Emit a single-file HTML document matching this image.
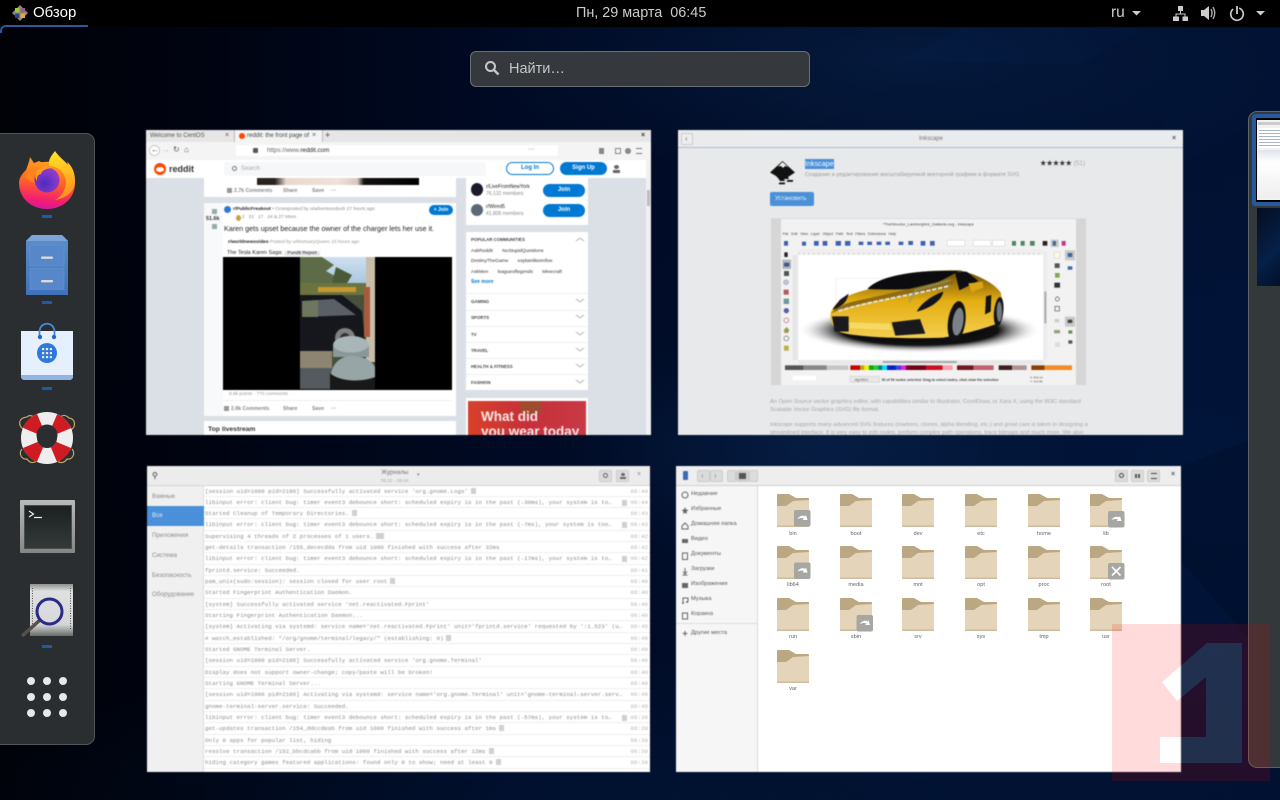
<!DOCTYPE html>
<html lang="ru"><head><meta charset="utf-8"><title>Обзор</title>
<style>
html,body{margin:0;padding:0;width:1280px;height:800px;overflow:hidden;background:#000}
body{position:relative;font-family:"Liberation Sans","Noto Sans CJK SC",sans-serif}
div,span,svg{box-sizing:border-box}
.a{position:absolute}
svg{position:absolute;display:block;overflow:visible}
#bg{left:0;top:0;width:1280px;height:800px;background:
radial-gradient(420px 120px at 900px 60px,rgba(14,48,96,.32),rgba(0,0,0,0) 100%),
radial-gradient(260px 120px at 820px 450px,rgba(14,48,96,.4),rgba(0,0,0,0) 100%),
radial-gradient(600px 400px at 1180px 460px,rgba(0,30,78,.35),rgba(0,0,0,0) 100%),
radial-gradient(700px 150px at 620px 800px,rgba(2,30,70,.35),rgba(0,0,0,0) 100%),
linear-gradient(90deg,#000208 0,#00030e 12%,#000a24 40%,#010f2c 70%,#011030 100%)}
.win{position:absolute;overflow:hidden;filter:blur(.45px)}
.t{position:absolute;white-space:nowrap}
.pill{position:absolute;border-radius:8px;background:#0079d3;color:#fff;font-size:6px;font-weight:bold;text-align:center}
.st{position:absolute;left:320px;font-size:4.4px;font-weight:bold;color:#444;white-space:nowrap}
.ln{position:absolute;left:320px;width:122px;height:1px;background:#edeff1}
#logs .r{height:11.33px;line-height:11px;border-bottom:1px solid #eee;position:relative;font-family:"Liberation Mono",monospace;font-size:5.85px;color:#8a8a8a;padding-left:1px;white-space:nowrap;background:#fff;overflow:hidden}
#logs .r i{position:absolute;right:2px;top:0;font-style:normal;color:#b5b5b5;background:#fff;padding-left:2px}
#logs .r b{display:inline-block;width:5px;height:6px;background:#d0d0d0;margin-left:3px;vertical-align:-1px}
#logs .r u{position:absolute;left:418px;top:3px;width:5px;height:6px;background:#d0d0d0}
.ls{position:absolute;left:5px;font-size:6.2px;color:#8b8b8b;white-space:nowrap}
.fs{position:absolute;left:15px;font-size:5.8px;color:#555;white-space:nowrap}
.fl{position:absolute;width:50px;text-align:center;font-size:5.6px;color:#666}
.btn{position:absolute;top:4px;height:12px;width:13px;background:#dcdcdc;border:1px solid #ccc;border-radius:2px}
.c{position:absolute;font-size:5.200px;line-height:8px;color:#878a8c;font-weight:bold;white-space:nowrap}
</style></head><body>
<div class="a" id="bg"></div>
<svg style="left:0;top:0" width="1280" height="800"><path d="M1080 65 1145 28H960L900 60Z" fill="#0c2f5e" opacity=".1"/><path d="M1145 28 1280 28V110L1170 170Z" fill="#02183a" opacity=".25"/><path d="M1090 500 1250 440V640L1180 560Z" fill="#000" opacity=".12"/></svg>

<!-- top bar -->
<div class="a" style="left:0;top:0;width:1280px;height:27px;background:#000"></div>
<div class="a" style="left:0;top:25px;width:88px;height:8px;border-top:2px solid #2a5a9e;border-left:2px solid #2a5a9e;border-top-left-radius:6px"></div>
<svg style="left:12px;top:5px" width="16" height="16" viewBox="0 0 16 16"><path d="M8 0 10.500 2.500V5.500H13.500L16 8 13.500 10.500H10.500V13.500L8 16 5.500 13.500V10.500H2.500L0 8 2.500 5.500H5.500V2.500Z" fill="#888"/><path d="M3 3H7.400V7.400H3Z" fill="#9ccd2a"/><path d="M8.600 3H13V7.400H8.600Z" fill="#9c5d8e"/><path d="M3 8.600H7.400V13H3Z" fill="#333f8c"/><path d="M8.600 8.600H13V13H8.600Z" fill="#efa724"/></svg>
<div class="t" style="left:33px;top:3px;font-size:15px;line-height:20px;color:#fff">Обзор</div>
<div class="t" style="left:576px;top:3px;font-size:14.400px;line-height:20px;color:#ccc">Пн, 29 марта&nbsp; 06:45</div>
<div class="t" style="left:1111px;top:3px;font-size:15.500px;line-height:20px;color:#ccc">ru</div>
<svg style="left:1080px;top:0" width="200" height="27" fill="#ccc"><path d="M52 11H61L56.500 15.500Z"/><path d="M98 6H103V11H98ZM93 16.500H99V21H93ZM102.500 16.500H108V21H102.500Z"/><path d="M100.500 11V14M96 17V14H105V17" fill="none" stroke="#ccc"/><path d="M121 10H124L129 6V20L124 16H121Z"/><path d="M131 9Q133 13 131 17M133 7Q136.500 13 133 19" fill="none" stroke="#aaa" stroke-width="1.400"/><circle cx="157" cy="14" r="6.300" fill="none" stroke="#ccc" stroke-width="1.600" stroke-dasharray="33 7" transform="rotate(-70 157 14)"/><path d="M157 6V14" stroke="#ccc" stroke-width="1.800"/><path d="M176 11H185L180.500 15.500Z"/></svg>

<!-- search -->
<div class="a" style="left:470px;top:51px;width:340px;height:36px;background:#35393d;border:1px solid #6a6e72;border-radius:6px"></div>
<svg style="left:484px;top:60px" width="16" height="16" fill="none" stroke="#c8c8c8" stroke-width="2"><circle cx="6.500" cy="6.500" r="4.500"/><path d="M10 10 14.500 14.500" stroke-width="2.400"/></svg>
<div class="t" style="left:509px;top:59px;font-size:14.500px;line-height:20px;color:#c6c6c6">Найти…</div>

<!-- dock -->
<div class="a" style="left:-12px;top:133px;width:107px;height:612px;background:#2a2e31;border:1px solid #50555a;border-radius:9px"></div>
<svg style="left:19px;top:151px" width="57" height="59" viewBox="0 0 57 59"><defs>
<linearGradient id="ff" x1=".6" y1="0" x2=".45" y2="1"><stop offset="0" stop-color="#ffa01c"/><stop offset=".45" stop-color="#ff6224"/><stop offset=".8" stop-color="#f5206e"/><stop offset="1" stop-color="#d6189b"/></linearGradient>
<linearGradient id="ffy" x1=".5" y1="0" x2=".6" y2="1"><stop offset="0" stop-color="#ffe226"/><stop offset="1" stop-color="#ff8a1e"/></linearGradient>
<radialGradient id="ffp" cx=".4" cy=".65" r=".7"><stop offset="0" stop-color="#4d2bc0"/><stop offset="1" stop-color="#9a3fc9"/></radialGradient></defs>
<path d="M6 22C8 16 10 12 11 6L15 12 20 10 24 12C16 14 10 18 6 22Z" fill="#ff8f1f"/>
<path d="M6 20C14 11 24 10 36 11 45 13 56 20 56 32 56 47 44 58 28 58 12 58 0 47 0 32 0 27 3 23 6 20Z" fill="url(#ff)"/>
<path d="M36 0C32 5 29 9 30 15 40 15 50 24 46 37 44 43 40 47 36 49 48 47 56 40 56 30 56 20 52 14 48 11L49 14C46 10 40 6 36 0Z" fill="url(#ffy)"/>
<circle cx="28" cy="29" r="12.500" fill="url(#ffp)"/>
<path d="M17 22C20 15 28 14 35 17 28 17 23 19 22 23 18 24 18 26 18 30 16 27 16 25 17 22Z" fill="#ff9a20"/>
<path d="M6 25C10 20 15 20 17 22 14 25 14 28 16 32 11 30 8 29 6 25Z" fill="#ff8420"/></svg>
<svg style="left:26px;top:235px" width="43" height="61" viewBox="0 0 43 61"><defs><linearGradient id="cb" x1="0" y1="0" x2="0" y2="1"><stop offset="0" stop-color="#5d8ecc"/><stop offset="1" stop-color="#3f72b9"/></linearGradient></defs>
<path d="M0 6 6 0H36L42 6V60H0Z" fill="url(#cb)"/><path d="M0 6 6 0H36L42 6Z" fill="#7ba5d6"/><rect x="4" y="10" width="34" height="21" fill="#5587c9" stroke="#6a9bd5" stroke-width=".5"/><rect x="4" y="33.500" width="34" height="21" fill="#5587c9" stroke="#6a9bd5" stroke-width=".5"/><rect x="15" y="21.500" width="12" height="2.400" rx="1" fill="#d8dade"/><rect x="15" y="45" width="12" height="2.400" rx="1" fill="#d8dade"/></svg>
<svg style="left:21px;top:322px" width="52" height="58" viewBox="0 0 52 58"><path d="M0 9H52V54Q52 58 48 58H4Q0 58 0 54Z" fill="#e6effc"/><path d="M0 53H52V54Q52 58 48 58H4Q0 58 0 54Z" fill="#91b4e2"/><path d="M18.500 15V10C18.500 -1 33.500 -1 33.500 10V15" fill="none" stroke="#4a87da" stroke-width="1.800"/><circle cx="19" cy="15" r="2.200" fill="#2a67b8"/><circle cx="33" cy="15" r="2.200" fill="#2a67b8"/><circle cx="26" cy="31" r="10" fill="#3079dc"/><g fill="#dfeaff"><rect x="21" y="26" width="2.200" height="2.200"/><rect x="24.900" y="26" width="2.200" height="2.200"/><rect x="28.800" y="26" width="2.200" height="2.200"/><rect x="21" y="30" width="2.200" height="2.200"/><rect x="24.900" y="30" width="2.200" height="2.200"/><rect x="28.800" y="30" width="2.200" height="2.200"/><rect x="21" y="34" width="2.200" height="2.200"/><rect x="24.900" y="34" width="2.200" height="2.200"/><rect x="28.800" y="34" width="2.200" height="2.200"/></g></svg>
<svg style="left:17px;top:410px" width="60" height="58" viewBox="0 0 60 58"><path d="M6 19C1 15 1 8 10 7 14 3 18 8 20 11M40 11C43 6 47 3 52 8 59 9 59 17 54 20M5 39C1 44 5 50 10 49 14 55 18 52 22 50M55 39C59 44 55 50 50 49 46 55 41 52 38 50" fill="none" stroke="#c6a65c" stroke-width="1.200"/><circle cx="30" cy="28" r="18" fill="none" stroke="#eee" stroke-width="16"/><circle cx="30" cy="28" r="18" fill="none" stroke="#cf1b22" stroke-width="16" stroke-dasharray="14 14.270" stroke-dashoffset="-7.100"/><circle cx="30" cy="25" r="10.500" fill="#2a2e31"/></svg>
<div class="a" style="left:20px;top:500px;width:55px;height:53px;background:linear-gradient(#b8baba,#858787);border-radius:1px"></div>
<div class="a" style="left:23.500px;top:505px;width:48px;height:44px;background:linear-gradient(#1b2020,#333a38);border:1px solid #4b4e4e"></div>
<svg style="left:28px;top:510px" width="16" height="14" fill="none" stroke="#eee" stroke-width="1.200"><path d="M1 1 5.500 4 1 7"/><path d="M6 7.500H14"/></svg>
<svg style="left:20px;top:582px" width="54" height="56" viewBox="0 0 54 56"><defs><linearGradient id="pg" x1="0" y1="0" x2="0" y2="1"><stop offset="0" stop-color="#8f9191"/><stop offset=".14" stop-color="#dfe1e1"/><stop offset=".78" stop-color="#d4d6d6"/><stop offset="1" stop-color="#6a6c6c"/></linearGradient></defs><rect x="10" y="2" width="43" height="52" fill="url(#pg)"/><path d="M12.500 6V48M50.500 6V48" stroke="#555" stroke-dasharray="1 1.500"/><path d="M20 38 2 54" stroke="#55504a" stroke-width="3.500"/><circle cx="29.500" cy="29.500" r="12.500" fill="#dcdce2" fill-opacity=".6" stroke="#2b2b85" stroke-width="3"/></svg>
<div class="a" style="left:42px;top:215px;width:10px;height:3px;background:#1e5ba3"></div>
<div class="a" style="left:42px;top:301px;width:10px;height:3px;background:#1e5ba3"></div>
<div class="a" style="left:42px;top:387px;width:10px;height:3px;background:#1e5ba3"></div>
<div class="a" style="left:42px;top:645px;width:10px;height:3px;background:#1e5ba3"></div>
<svg style="left:0;top:670px" width="95" height="55" fill="#e5e8ea"><circle cx="31" cy="11" r="4"/><circle cx="47" cy="11" r="4"/><circle cx="63" cy="11" r="4"/><circle cx="31" cy="27" r="4"/><circle cx="47" cy="27" r="4"/><circle cx="63" cy="27" r="4"/><circle cx="31" cy="43" r="4"/><circle cx="47" cy="43" r="4"/><circle cx="63" cy="43" r="4"/></svg>

<!-- reddit window -->
<div class="win" style="left:146px;top:130px;width:505px;height:305px;background:#dae0e6">
 <div class="a" style="left:0;top:0;width:505px;height:12px;background:#e6e6e6"></div>
 <div class="a" style="left:88px;top:0;width:89px;height:12px;background:#f4f4f4;border-left:1px solid #bbb;border-right:1px solid #bbb"></div>
 <div class="t" style="left:4px;top:1px;font-size:6px;line-height:10px;color:#555">Welcome to CentOS</div>
 <div class="t" style="left:79px;top:1px;font-size:7px;line-height:10px;color:#555">×</div>
 <div class="a" style="left:93px;top:3px;width:6px;height:6px;border-radius:50%;background:#ff4500"></div>
 <div class="t" style="left:101px;top:1px;font-size:6px;line-height:10px;color:#444">reddit: the front page of</div>
 <div class="t" style="left:166px;top:1px;font-size:7px;line-height:10px;color:#555">×</div>
 <div class="t" style="left:179px;top:0;font-size:9px;line-height:11px;color:#444">+</div>
 <div class="t" style="left:495px;top:1px;font-size:7px;line-height:10px;font-weight:bold;color:#333">×</div>
 <div class="a" style="left:0;top:12px;width:505px;height:18px;background:#f4f4f4"></div>
 <div class="a" style="left:3px;top:15px;width:11px;height:11px;border-radius:50%;background:#fff;border:1px solid #ccc"></div>
 <div class="t" style="left:5px;top:15px;font-size:8px;line-height:10px;color:#555">←</div>
 <div class="t" style="left:16px;top:15px;font-size:8px;line-height:10px;color:#bbb">→</div>
 <div class="t" style="left:27px;top:15px;font-size:8px;line-height:10px;color:#555">↻</div>
 <div class="t" style="left:38px;top:15px;font-size:8px;line-height:10px;color:#555">⌂</div>
 <div class="a" style="left:90px;top:15px;width:322px;height:11px;background:#fff"></div>
 <div class="t" style="left:121px;top:16px;font-size:6.200px;line-height:9px;color:#666">https://www.<span style="color:#222">reddit.com</span></div>
 <div class="a" style="left:107px;top:18px;width:5px;height:5px;background:#555;border-radius:1px"></div>
 <div class="t" style="left:382px;top:15px;font-size:7px;line-height:9px;color:#666">···</div>
 <div class="a" style="left:453px;top:18px;width:5px;height:6px;background:#888"></div>
 <div class="a" style="left:469px;top:18px;width:6px;height:6px;border:1px solid #888"></div>
 <div class="a" style="left:479px;top:18px;width:6px;height:6px;background:#888;border-radius:50%"></div>
 <div class="a" style="left:490px;top:18px;width:6px;height:6px;border-top:1px solid #777;border-bottom:1px solid #777"></div>
 <div class="a" style="left:0;top:30px;width:500px;height:18px;background:#fff"></div>
 <div class="a" style="left:8px;top:33px;width:12px;height:12px;border-radius:50%;background:#ff4500"></div>
 <div class="a" style="left:10px;top:37px;width:8px;height:5px;border-radius:50%;background:#fff"></div>
 <div class="t" style="left:23px;top:32px;font-size:9px;line-height:14px;font-weight:bold;color:#333">reddit</div>
 <div class="a" style="left:78px;top:32px;width:262px;height:14px;background:#f6f7f8;border-radius:2px"></div>
 <div class="t" style="left:95px;top:34px;font-size:6px;line-height:10px;color:#aaa">Search</div>
 <div class="a" style="left:86px;top:36px;width:5px;height:5px;border:1px solid #777;border-radius:50%"></div>
 <div class="pill" style="left:360px;top:32px;width:48px;height:13px;background:#fff;border:1px solid #0079d3;color:#0079d3;line-height:11px">Log In</div>
 <div class="pill" style="left:414px;top:32px;width:47px;height:13px;line-height:13px">Sign Up</div>
 <div class="a" style="left:468px;top:35px;width:5px;height:4px;background:#666;border-radius:50%"></div>
 <div class="a" style="left:467px;top:40px;width:7px;height:3px;background:#666"></div>
 <div class="a" style="left:58px;top:48px;width:252px;height:19px;background:#fff"></div>
 <div class="a" style="left:111px;top:48px;width:162px;height:7px;background:linear-gradient(90deg,#2a2220 0,#2a2220 11%,#e8d8d0 18%,#efe2da 50%,#d8c8c0 62%,#141010 66%,#000 100%)"></div>
 <div class="a" style="left:81px;top:58px;width:5px;height:5px;background:#999"></div>
 <div class="c" style="left:88px;top:57px">2.7k Comments</div><div class="c" style="left:137px;top:57px">Share</div><div class="c" style="left:166px;top:57px">Save</div><div class="c" style="left:185px;top:57px">···</div>
 <!-- post -->
 <div class="a" style="left:58px;top:73px;width:252px;height:213px;background:#fff"></div>
 <div class="a" style="left:58px;top:73px;width:19px;height:213px;background:#f8f9fa"></div>
 <div class="t" style="left:60px;top:85px;font-size:5.400px;line-height:8px;font-weight:bold;color:#333">51.6k</div>
 <div class="a" style="left:66px;top:79px;width:5px;height:5px;background:#9aa"></div>
 <div class="a" style="left:66px;top:94px;width:5px;height:5px;background:#9aa"></div>
 <div class="a" style="left:78px;top:76px;width:7px;height:7px;border-radius:50%;background:#2a7ad0"></div>
 <div class="t" style="left:87px;top:76px;font-size:4.800px;line-height:8px;color:#888"><b style="color:#222">r/PublicFreakout</b> • Crossposted by u/adventureduck 27 hours ago</div>
 <div class="t" style="left:96px;top:84px;font-size:4.800px;line-height:8px;color:#888">2 &nbsp;&nbsp;31 &nbsp;&nbsp;17 &nbsp;&nbsp;24 &amp; 27 More</div>
 <div class="a" style="left:90px;top:85px;width:5px;height:6px;border-radius:50%;background:#c9a23a"></div>
 <div class="t" style="left:78px;top:93px;font-size:7.200px;line-height:11px;color:#222">Karen gets upset because the owner of the charger lets her use it.</div>
 <div class="pill" style="left:283px;top:75px;width:24px;height:10px;line-height:10px;font-size:5px">+ Join</div>
 <div class="t" style="left:82px;top:109px;font-size:4.800px;line-height:8px;color:#999"><b style="color:#222">r/worldnewsvideo</b> Posted by u/MortuaryQueen 23 hours ago</div>
 <div class="t" style="left:81px;top:119px;font-size:5.500px;line-height:9px;color:#222">The Tesla Karen Saga: <span style="background:#e5e7ea;padding:0 3px;font-size:4.800px">Pundit Report</span></div>
 <div class="a" style="left:77px;top:127px;width:229px;height:133px;background:#000"></div>
 <svg style="left:154px;top:127px" width="75" height="132" viewBox="0 0 75 132"><defs><linearGradient id="sk" x1="0" y1="0" x2="0" y2="1"><stop offset="0" stop-color="#cfe0ee"/><stop offset="1" stop-color="#a4c4de"/></linearGradient></defs><rect width="75" height="132" fill="#46503a"/><rect width="75" height="30" fill="url(#sk)"/><path d="M0 0H22L34 8 26 14 40 22 28 36H0Z" fill="#5e6b48"/><path d="M36 10 52 18 46 28 32 26Z" fill="#4a5a38"/><rect y="26" width="66" height="12" fill="#6a7440"/><rect x="18" y="30" width="38" height="5" fill="#c99830"/><path d="M0 38 42 38 62 54 66 94H0Z" fill="#15171d"/><path d="M2 44 34 42 56 58 2 60Z" fill="#5b6066"/><path d="M2 44 18 43V60H2Z" fill="#6e7660"/><circle cx="45" cy="81" r="13" fill="#181818"/><circle cx="45" cy="81" r="10" fill="#7e8082"/><circle cx="45" cy="81" r="5" fill="#333"/><rect x="66" y="0" width="9" height="105" fill="#c9bda8"/><path d="M64 30H70V80H64Z" fill="#a85a3c"/><rect y="94" width="32" height="18" fill="#8d8572"/><rect y="111" width="34" height="21" fill="#555a5e"/><ellipse cx="51" cy="88" rx="18" ry="9" fill="#a9b6b8"/><path d="M33 88C36 98 66 98 69 88V100H33Z" fill="#8b989a"/><path d="M31 129C28 110 38 98 54 99 66 100 73 105 75 110V129Z" fill="#98a5a7"/><path d="M30 116C38 124 60 126 75 120V132H30Z" fill="#191919"/></svg>
 <div class="t" style="left:83px;top:261px;font-size:4.800px;line-height:8px;color:#999">8.6k points · 770 comments</div>
 <div class="a" style="left:77px;top:270px;width:229px;height:1px;background:#eee"></div>
 <div class="a" style="left:78px;top:276px;width:5px;height:5px;background:#999"></div>
 <div class="c" style="left:85px;top:275px">2.8k Comments</div><div class="c" style="left:137px;top:275px">Share</div><div class="c" style="left:166px;top:275px">Save</div><div class="c" style="left:185px;top:275px">···</div>
 <div class="a" style="left:58px;top:291px;width:252px;height:14px;background:#fff"></div>
 <div class="t" style="left:62px;top:295px;font-size:6.800px;line-height:10px;font-weight:bold;color:#333">Top livestream</div>
 <!-- side -->
 <div class="a" style="left:320px;top:48px;width:122px;height:47px;background:#fff"></div>
 <div class="a" style="left:325px;top:53px;width:12px;height:13px;border-radius:50%;background:#1a1a2a"></div>
 <div class="a" style="left:325px;top:74px;width:12px;height:12px;border-radius:50%;background:#5d6877"></div>
 <div class="t" style="left:340px;top:54px;font-size:5px;line-height:7px;color:#222">r/LiveFromNewYork<br><span style="color:#888">76,132 members</span></div>
 <div class="t" style="left:340px;top:74px;font-size:5px;line-height:7px;color:#222">r/Wired5<br><span style="color:#888">41,806 members</span></div>
 <div class="pill" style="left:397px;top:54px;width:42px;height:13px;line-height:13px;font-size:6px">Join</div>
 <div class="pill" style="left:397px;top:74px;width:42px;height:13px;line-height:13px;font-size:6px">Join</div>
 <div class="a" style="left:320px;top:102px;width:122px;height:158px;background:#fff"></div>
 <div class="st" style="left:325px;top:107px">POPULAR COMMUNITIES</div>
 <div class="t" style="left:325px;top:117px;font-size:4.800px;line-height:10px;color:#333;word-spacing:8px">AskReddit NoStupidQuestions<br>DestinyTheGame explainlikeimfive</div>
 <div class="t" style="left:325px;top:139px;height:5px;overflow:hidden;font-size:4.800px;line-height:8px;color:#333;word-spacing:8px">AskMen leagueoflegends Minecraft</div>
 <div class="t" style="left:325px;top:149px;font-size:5px;line-height:7px;font-weight:bold;color:#0079d3">See more</div>
 <div class="ln" style="top:163px"></div><div class="ln" style="top:180px"></div><div class="ln" style="top:196px"></div><div class="ln" style="top:212px"></div><div class="ln" style="top:228px"></div><div class="ln" style="top:244px"></div>
 <div class="st" style="left:325px;top:169px">GAMING</div><div class="st" style="left:325px;top:185px">SPORTS</div><div class="st" style="left:325px;top:202px">TV</div><div class="st" style="left:325px;top:218px">TRAVEL</div><div class="st" style="left:325px;top:234px">HEALTH &amp; FITNESS</div><div class="st" style="left:325px;top:250px">FASHION</div>
 <svg style="left:429px;top:105px" width="10" height="155" fill="none" stroke="#aaa" stroke-width=".8"><path d="M1 6 5 3 9 6"/><path d="M1 64 5 67 9 64M1 80 5 83 9 80M1 97 5 100 9 97M1 113 5 116 9 113M1 129 5 132 9 129M1 145 5 148 9 145"/></svg>
 <div class="a" style="left:320px;top:268px;width:122px;height:37px;background:#fff"></div>
 <div class="a" style="left:322px;top:271px;width:118px;height:34px;background:linear-gradient(90deg,#d8412a 0,#c5303a 50%,#c93a45 100%);overflow:hidden">
  <div class="a" style="left:52px;top:0;width:22px;height:14px;background:#a04a30;border-radius:0 0 8px 8px"></div>
  <div class="t" style="left:13px;top:8px;font-size:13.500px;line-height:15px;font-weight:bold;color:#f4eaea">What did<br>you wear today</div>
 </div>
 <div class="a" style="left:500px;top:30px;width:5px;height:275px;background:#f0f0f0"></div>
 <div class="a" style="left:501px;top:60px;width:3px;height:16px;background:#bcbcbc"></div>
</div>

<!-- inkscape window -->
<div class="win" style="left:678px;top:130px;width:505px;height:305px;background:#e8e9ea">
 <div class="a" style="left:0;top:0;width:505px;height:18px;background:#eaebec;border-bottom:1px solid #a9bed4"></div>
 <div class="a" style="left:3px;top:3px;width:12px;height:12px;background:#eee;border:1px solid #ccc;border-radius:1px"></div>
 <div class="t" style="left:7px;top:4px;font-size:8px;line-height:10px;color:#777">‹</div>
 <div class="t" style="left:241px;top:5px;font-size:6px;line-height:8px;color:#777">Inkscape</div>
 <div class="t" style="left:494px;top:4px;font-size:7px;line-height:9px;font-weight:bold;color:#555">×</div>
 <svg style="left:92px;top:31px" width="26" height="24" viewBox="0 0 26 24"><path d="M12.500 0 25 11.500 18 16 19 18 14 18 15 20 10 20 8 17 6 15 0 11.500Z" fill="#111"/><path d="M12.500 1 8 5.500 11 5 13 7 15 5 18 6Z" fill="#eee"/><rect x="17" y="19" width="6" height="1.800" fill="#111"/><rect x="9" y="21.500" width="6" height="1.800" fill="#111"/></svg>
 <div class="a" style="left:127px;top:29px;width:29px;height:10px;background:#4a90d9"></div>
 <div class="t" style="left:127px;top:29px;font-size:7.200px;line-height:10px;color:#fff">Inkscape</div>
 <div class="t" style="left:127px;top:41px;font-size:5.600px;line-height:8px;color:#9a9a9a">Создание и редактирование масштабируемой векторной графики в формате SVG</div>
 <div class="t" style="left:362px;top:29px;font-size:6.400px;line-height:9px;color:#333">★★★★★ <span style="color:#aaa">(51)</span></div>
 <div class="a" style="left:92px;top:62px;width:44px;height:14px;background:#4a90d9;border-radius:2px"></div>
 <div class="t" style="left:97px;top:65px;font-size:6px;line-height:8px;color:#e8f0fa">Установить</div>
 <div class="t" style="left:92px;top:268px;width:320px;font-size:5.700px;line-height:8px;color:#a6a6a6;white-space:normal">An Open Source vector graphics editor, with capabilities similar to Illustrator, CorelDraw, or Xara X, using the W3C standard Scalable Vector Graphics (SVG) file format.</div>
 <div class="t" style="left:92px;top:291px;width:320px;font-size:5.700px;line-height:8px;color:#a6a6a6;white-space:normal">Inkscape supports many advanced SVG features (markers, clones, alpha blending, etc.) and great care is taken in designing a streamlined interface. It is very easy to edit nodes, perform complex path operations, trace bitmaps and much more. We also</div>
</div>
<svg style="left:770px;top:215px;filter:blur(.45px)" width="320" height="220" viewBox="0 0 960 660"><defs>
<linearGradient id="cy" x1="0" y1="0" x2="0" y2="1"><stop offset="0" stop-color="#6b4a05"/><stop offset=".45" stop-color="#e4ae12"/><stop offset="1" stop-color="#f4cf50"/></linearGradient>
<radialGradient id="sh" cx=".5" cy=".5" r=".5"><stop offset="0" stop-color="#000"/><stop offset=".65" stop-color="#111"/><stop offset="1" stop-color="#fff" stop-opacity="0"/></radialGradient></defs>
<rect x="3" y="10" width="945" height="500" fill="#d6d6d6"/>
<rect x="33" y="12" width="885" height="498" fill="#f2f2f2"/>
<text x="475" y="32" font-size="12" fill="#444" text-anchor="middle" font-family="Liberation Sans,sans-serif">*TheStructor_Lamborghini_Gallardo.svg - Inkscape</text>
<text x="38" y="60" font-size="11" fill="#444" font-family="Liberation Sans,sans-serif" word-spacing="5">File Edit View Layer Object Path Text Filters Extensions Help</text>
<g fill="#3f5fb0"><rect x="42" y="78" width="12" height="14"/><rect x="96" y="80" width="12" height="12"/><rect x="132" y="78" width="14" height="14"/><rect x="158" y="78" width="14" height="14"/><rect x="197" y="78" width="16" height="14"/><rect x="225" y="78" width="16" height="14"/><rect x="266" y="80" width="14" height="10"/><rect x="292" y="80" width="14" height="10"/><rect x="320" y="80" width="14" height="10"/><rect x="346" y="80" width="14" height="10"/><rect x="386" y="80" width="14" height="10"/><rect x="415" y="78" width="14" height="12"/><rect x="452" y="78" width="14" height="14"/><rect x="480" y="78" width="14" height="14"/></g>
<g fill="#fff" stroke="#bbb"><rect x="532" y="76" width="52" height="17"/><rect x="610" y="76" width="52" height="17"/><rect x="668" y="76" width="36" height="17"/></g>
<g fill="#50835f"><rect x="726" y="78" width="12" height="14"/><rect x="752" y="78" width="12" height="14"/><rect x="780" y="78" width="14" height="14"/></g><rect x="818" y="78" width="14" height="14" fill="#222"/><rect x="842" y="74" width="24" height="22" fill="#c8c8c8"/><rect x="848" y="78" width="10" height="14" fill="#3a6aa5"/><rect x="875" y="78" width="12" height="14" fill="#c03a7a"/>
<rect x="86" y="104" width="735" height="14" fill="#eee"/><path d="M86 116H820" stroke="#777" stroke-dasharray="1 14" stroke-width="5"/>
<rect x="68" y="120" width="14" height="315" fill="#e6e6e6"/>
<rect x="86" y="120" width="733" height="315" fill="#fff"/>
<rect x="820" y="110" width="12" height="325" fill="#ececec"/><rect x="823" y="230" width="6" height="95" fill="#aaa"/>
<rect x="86" y="435" width="735" height="12" fill="#e8e8e8"/><rect x="338" y="438" width="222" height="6" fill="#aaa"/>
<g><rect x="38" y="135" width="24" height="26" fill="#bbb" stroke="#888"/><rect x="43" y="112" width="10" height="14" fill="#222"/><rect x="42" y="143" width="16" height="12" fill="#3a5a8a"/><rect x="42" y="168" width="15" height="15" fill="#555"/><circle cx="48" cy="202" r="7" fill="#bcd" stroke="#556"/><rect x="41" y="224" width="15" height="15" fill="#b65a5a"/><rect x="41" y="251" width="16" height="16" fill="#6a9a9a"/><circle cx="49" cy="287" r="8" fill="#5c5ca8"/><circle cx="49" cy="316" r="7" fill="none" stroke="#b65a7a" stroke-width="2"/><path d="M41 345 50 336 58 345 54 354H44Z" fill="#9c9c50"/><circle cx="49" cy="370" r="7" fill="none" stroke="#666" stroke-width="2"/><rect x="42" y="392" width="14" height="15" fill="#bcb040"/></g>
<ellipse cx="448" cy="345" rx="365" ry="70" fill="url(#sh)"/>
<path d="M182 295C190 265 220 240 300 222 340 178 440 165 570 166 610 175 670 200 692 232 702 270 698 300 692 322 640 342 590 355 520 368 420 372 270 368 212 352 190 340 178 320 182 295Z" fill="url(#cy)"/>
<path d="M292 222C330 180 440 165 566 168 530 190 490 212 440 220 390 225 340 224 292 222Z" fill="#0c0c10"/>
<path d="M555 172 590 170 625 198 568 226Z" fill="#0d0d12"/>
<path d="M182 296C230 270 390 245 520 222L540 215 552 200 548 190C470 210 340 240 240 262 210 272 192 284 182 296Z" fill="#8e6a12"/>
<path d="M205 288C300 258 430 240 540 212" fill="none" stroke="#dfe3e0" stroke-width="6" stroke-dasharray="14 4"/>
<path d="M418 262 436 226 470 216 540 196" fill="none" stroke="#8a9a74" stroke-width="6" stroke-dasharray="5 3"/>
<path d="M190 280 210 254 236 236C230 262 218 272 190 285Z" fill="#17171c"/>
<path d="M440 290C455 262 490 240 520 230 515 258 480 280 440 290Z" fill="#12121a"/>
<path d="M186 304H236V350H194Z" fill="#1a1a1e"/><path d="M365 322 450 312 466 356 376 362Z" fill="#1a1a1e"/>
<path d="M236 322 360 326 365 345 240 340Z" fill="#f7df6e" opacity=".8"/>
<ellipse cx="560" cy="320" rx="26" ry="62" fill="#121214" transform="rotate(8 560 320)"/><ellipse cx="564" cy="320" rx="16" ry="42" fill="#7a8287" transform="rotate(8 564 320)"/>
<ellipse cx="686" cy="290" rx="14" ry="44" fill="#141416" transform="rotate(6 686 290)"/><ellipse cx="688" cy="290" rx="8" ry="30" fill="#727a80"/>
<path d="M595 205 638 200 640 218 604 232Z" fill="#d8a614"/><path d="M648 244 664 240 662 290 645 298Z" fill="#121212"/>
<path d="M198 190H340M198 190V268" fill="none" stroke="#aaa" stroke-dasharray="2 3"/>
<rect x="33" y="448" width="885" height="17" fill="#f0f0f0"/>
<rect x="45" y="451" width="125" height="14" fill="#555"/><rect x="100" y="451" width="135" height="14" fill="#aaa" opacity=".6"/>
<g><rect x="241" y="451" width="30" height="14" fill="#cc0000"/><rect x="271" y="451" width="12" height="14" fill="#aab000"/><rect x="283" y="451" width="14" height="14" fill="#ffe800"/><rect x="297" y="451" width="14" height="14" fill="#00aa00"/><rect x="311" y="451" width="14" height="14" fill="#22cc22"/><rect x="325" y="451" width="12" height="14" fill="#008080"/><rect x="337" y="451" width="14" height="14" fill="#00e0ff"/><rect x="351" y="451" width="28" height="14" fill="#0020c0"/><rect x="379" y="451" width="14" height="14" fill="#4040e0"/><rect x="393" y="451" width="15" height="14" fill="#e020e0"/><rect x="408" y="451" width="60" height="14" fill="#700018"/><rect x="468" y="451" width="50" height="14" fill="#c81020"/><rect x="518" y="451" width="30" height="14" fill="#f8a0a8"/><rect x="561" y="451" width="50" height="14" fill="#701820"/><rect x="611" y="451" width="60" height="14" fill="#c06070"/><rect x="686" y="451" width="40" height="14" fill="#3a2020"/><rect x="726" y="451" width="44" height="14" fill="#b09090"/><rect x="784" y="451" width="40" height="14" fill="#884000"/><rect x="824" y="451" width="82" height="14" fill="#f08c28"/></g>
<rect x="68" y="482" width="70" height="14" fill="#fff"/><rect x="240" y="484" width="88" height="18" fill="#e8e8e8" stroke="#bbb"/>
<text x="335" y="498" font-size="10.500" font-weight="bold" fill="#444" font-family="Liberation Sans,sans-serif">50 of 50 nodes selected. Drag to select nodes, click clear the selection</text>
<text x="252" y="498" font-size="10" fill="#555" font-family="Liberation Sans,sans-serif">-8g14512</text>
<text x="780" y="491" font-size="9" fill="#555" font-family="Liberation Sans,sans-serif">X: 843.14</text><text x="780" y="503" font-size="9" fill="#555" font-family="Liberation Sans,sans-serif">Y: 314.85</text>
<g><rect x="853" y="112" width="16" height="18" fill="#fbfbe0" stroke="#bbb"/><rect x="854" y="145" width="15" height="14" fill="#555"/><rect x="855" y="174" width="14" height="14" fill="#7bac55"/><rect x="853" y="203" width="17" height="15" fill="#333"/><circle cx="862" cy="252" r="6" fill="none" stroke="#555" stroke-width="2"/><rect x="855" y="274" width="13" height="14" fill="none" stroke="#555" stroke-width="2"/><rect x="854" y="312" width="14" height="10" fill="#ccc"/><rect x="852" y="345" width="18" height="10" fill="#9ba07a"/><rect x="855" y="382" width="15" height="14" fill="#ddd"/><rect x="885" y="106" width="30" height="30" fill="#c8c8c8"/><rect x="893" y="114" width="14" height="12" fill="#3a6aa5"/><rect x="893" y="154" width="14" height="10" fill="#3a6aa5"/><rect x="885" y="305" width="30" height="30" fill="#c8c8c8"/><rect x="893" y="314" width="14" height="10" fill="#444"/><rect x="895" y="346" width="12" height="10" fill="#5b9a4a"/><rect x="895" y="376" width="12" height="10" fill="#555"/></g>
</svg>

<!-- logs window -->
<div class="win" id="logs" style="left:147px;top:466px;width:503px;height:306px;background:#fff">
 <div class="a" style="left:0;top:0;width:503px;height:20px;background:#ececec;border-bottom:1px solid #d4d4d4"></div>
 <div class="t" style="left:5px;top:5px;font-size:8px;line-height:9px;font-weight:bold;color:#666">⚲</div>
 <div class="t" style="left:234px;top:3px;font-size:6.200px;line-height:8px;color:#777;text-align:center">Журналы<br><span style="font-size:4.500px;color:#aaa">05:32 – 06:44</span></div>
 <div class="t" style="left:270px;top:6px;font-size:5px;line-height:7px;color:#888">▾</div>
 <div class="btn" style="left:452px"></div><div class="btn" style="left:469px"></div>
 <div class="a" style="left:456px;top:7px;width:5px;height:5px;border:1px solid #666;border-radius:50%"></div>
 <div class="a" style="left:474px;top:7px;width:4px;height:3px;background:#666;border-radius:50%"></div><div class="a" style="left:473px;top:11px;width:6px;height:2px;background:#666"></div>
 <div class="t" style="left:490px;top:5px;font-size:7px;line-height:8px;color:#888">×</div>
 <div class="a" style="left:0;top:20px;width:57px;height:286px;background:#f0f0f0;border-right:1px solid #ddd"></div>
 <div class="a" style="left:0;top:39.500px;width:57px;height:20px;background:#4a90d9"></div>
 <div class="ls" style="top:27px">Важные</div><div class="ls" style="top:46px;color:#e2eefa">Все</div><div class="ls" style="top:66px">Приложения</div><div class="ls" style="top:86px">Система</div><div class="ls" style="top:106px">Безопасность</div><div class="ls" style="top:125px">Оборудование</div>
 <div class="a" style="left:57px;top:19.500px;width:446px">
 <div class="r">[session uid=1000 pid=2186] Successfully activated service 'org.gnome.Logs'<b></b><i>06:44</i></div>
 <div class="r">libinput error: client bug: timer event3 debounce short: scheduled expiry is in the past (-30ms), your system is to…<u></u><i>06:44</i></div>
 <div class="r">Started Cleanup of Temporary Directories.<b></b><i>06:43</i></div>
 <div class="r">libinput error: client bug: timer event3 debounce short: scheduled expiry is in the past (-7ms), your system is too…<u></u><i>06:43</i></div>
 <div class="r">Supervising 4 threads of 2 processes of 1 users.<b style="width:8px"></b><i>06:42</i></div>
 <div class="r">get-details transaction /155_dececdda from uid 1000 finished with success after 32ms<i>06:42</i></div>
 <div class="r">libinput error: client bug: timer event3 debounce short: scheduled expiry is in the past (-17ms), your system is to…<u></u><i>06:42</i></div>
 <div class="r">fprintd.service: Succeeded.<i>06:41</i></div>
 <div class="r">pam_unix(sudo:session): session closed for user root<b></b><i>06:40</i></div>
 <div class="r">Started Fingerprint Authentication Daemon.<i>06:40</i></div>
 <div class="r">[system] Successfully activated service 'net.reactivated.Fprint'<i>06:40</i></div>
 <div class="r">Starting Fingerprint Authentication Daemon...<i>06:40</i></div>
 <div class="r">[system] Activating via systemd: service name='net.reactivated.Fprint' unit='fprintd.service' requested by ':1.523' (u…<i>06:40</i></div>
 <div class="r"># watch_established: "/org/gnome/terminal/legacy/" (establishing: 0)<b></b><i>06:40</i></div>
 <div class="r">Started GNOME Terminal Server.<i>06:40</i></div>
 <div class="r">[session uid=1000 pid=2186] Successfully activated service 'org.gnome.Terminal'<i>06:40</i></div>
 <div class="r">Display does not support owner-change; copy/paste will be broken!<i>06:40</i></div>
 <div class="r">Starting GNOME Terminal Server...<i>06:40</i></div>
 <div class="r">[session uid=1000 pid=2186] Activating via systemd: service name='org.gnome.Terminal' unit='gnome-terminal-server.serv…<i>06:40</i></div>
 <div class="r">gnome-terminal-server.service: Succeeded.<i>06:40</i></div>
 <div class="r">libinput error: client bug: timer event3 debounce short: scheduled expiry is in the past (-57ms), your system is to…<u></u><i>06:39</i></div>
 <div class="r">get-updates transaction /154_ddccdeab from uid 1000 finished with success after 1ms<b></b><i>06:39</i></div>
 <div class="r">Only 0 apps for popular list, hiding<i>06:39</i></div>
 <div class="r">resolve transaction /152_bbcdcabb from uid 1000 finished with success after 12ms<b></b><i>06:39</i></div>
 <div class="r">hiding category games featured applications: found only 0 to show; need at least 9<b></b><i>06:39</i></div>
 </div>
</div>

<!-- files window -->
<div class="win" style="left:676px;top:466px;width:505px;height:306px;background:#fff">
 <div class="a" style="left:0;top:0;width:505px;height:20px;background:#eeeeee;border-bottom:1px solid #cfcfcf"></div>
 <div class="a" style="left:7px;top:5px;width:5px;height:9px;background:#3a6ab5;border-radius:1px"></div>
 <div class="btn" style="left:21px;width:13px"></div><div class="btn" style="left:34px;width:13px"></div><div class="btn" style="left:51px;width:9px"></div><div class="btn" style="left:60px;width:13px;background:#cfcfcf"></div><div class="btn" style="left:73px;width:9px"></div>
 <div class="t" style="left:25px;top:5px;font-size:8px;line-height:9px;color:#888">‹</div><div class="t" style="left:38px;top:5px;font-size:8px;line-height:9px;color:#888">›</div>
 <div class="a" style="left:63px;top:7px;width:7px;height:6px;background:#555"></div>
 <div class="btn" style="left:439px"></div><div class="btn" style="left:455px"></div><div class="btn" style="left:471px"></div>
 <div class="a" style="left:443px;top:7px;width:5px;height:5px;border:1px solid #444;border-radius:50%"></div>
 <div class="a" style="left:459px;top:8px;width:5px;height:4px;border-left:2px solid #555;border-right:2px solid #555"></div>
 <div class="a" style="left:475px;top:7px;width:6px;height:6px;border-top:1px solid #444;border-bottom:1px solid #444"></div>
 <div class="t" style="left:495px;top:5px;font-size:7px;line-height:8px;font-weight:bold;color:#555">×</div>
 <div class="a" style="left:0;top:20px;width:82px;height:286px;background:#f6f6f6;border-right:1px solid #d8d8d8"></div>
 <div class="fs" style="top:25px">Недавние</div><div class="fs" style="top:40px">Избранные</div><div class="fs" style="top:55px">Домашняя папка</div><div class="fs" style="top:70px">Видео</div><div class="fs" style="top:85px">Документы</div><div class="fs" style="top:100px">Загрузки</div><div class="fs" style="top:115px">Изображения</div><div class="fs" style="top:130px">Музыка</div><div class="fs" style="top:145px">Корзина</div><div class="fs" style="top:164px">Другие места</div>
 <div class="a" style="left:0;top:157px;width:82px;height:1px;background:#ddd"></div>
 <svg style="left:5px;top:24px" width="8" height="150" fill="#666"><circle cx="4" cy="5" r="3" fill="none" stroke="#666"/><path d="M4 17 5 19.500 7.500 20 5.500 21.500 6 24 4 22.800 2 24 2.500 21.500.5 20 3 19.500Z"/><path d="M1 36 4 33 7 36V39H1Z" fill="none" stroke="#666"/><rect x="1" y="49" width="6" height="4"/><rect x="1.500" y="63" width="5" height="6.500" fill="none" stroke="#666"/><path d="M4 78V84M1.500 85H6.500M2 81.500 4 84 6 81.500" fill="none" stroke="#666"/><rect x="1" y="93" width="6" height="5"/><path d="M2 113V108H7V112" fill="none" stroke="#666"/><circle cx="2" cy="113" r="1"/><circle cx="6" cy="112" r="1"/><rect x="1.500" y="123" width="5" height="6" fill="none" stroke="#666"/><path d="M4 141V146M1.500 143.500H6.500" stroke="#666"/></svg>
</div>
<svg style="left:0;top:0;filter:blur(.3px)" width="1280" height="800" viewBox="0 0 1280 800">
<defs>
<g id="fd"><path d="M0 1Q0 0 1 0H12L19 4H31Q32 4 32 5V16H0Z" fill="#bba882"/><path d="M0 12H9L16 7 32 6V32.500H0Z" fill="#e4d4b9"/><rect y="31.500" width="32" height="1.500" fill="#cdbca0"/></g>
<g id="lk"><rect width="16.500" height="16.500" rx="2" fill="#a6a6a2"/><path d="M3.500 9C5 6 9 5 11 6.500L12 5 13.500 10 8.500 10 10 8.500C8 7.500 5.500 8 3.500 9Z" fill="#fff"/></g>
</defs>
<use href="#fd" x="777" y="494"/><use href="#fd" x="840" y="494"/><use href="#fd" x="902" y="494"/><use href="#fd" x="965" y="494"/><use href="#fd" x="1028" y="494"/><use href="#fd" x="1090" y="494"/>
<use href="#fd" x="777" y="546"/><use href="#fd" x="840" y="546"/><use href="#fd" x="902" y="546"/><use href="#fd" x="965" y="546"/><use href="#fd" x="1028" y="546"/><use href="#fd" x="1090" y="546"/>
<use href="#fd" x="777" y="598"/><use href="#fd" x="840" y="598"/><use href="#fd" x="902" y="598"/><use href="#fd" x="965" y="598"/><use href="#fd" x="1028" y="598"/><use href="#fd" x="1090" y="598"/>
<use href="#fd" x="777" y="650"/>
<use href="#lk" x="794" y="510"/><use href="#lk" x="1108" y="511"/><use href="#lk" x="794" y="562.500"/><use href="#lk" x="856.500" y="615"/>
<rect x="1108" y="563" width="16.500" height="16.500" rx="2" fill="#a6a6a2"/><path d="M1112 567 1120.500 575.500M1120.500 567 1112 575.500" stroke="#fff" stroke-width="1.600"/>
</svg>
<div class="fl" style="left:768px;top:531px">bin</div><div class="fl" style="left:831px;top:531px">boot</div><div class="fl" style="left:893px;top:531px">dev</div><div class="fl" style="left:956px;top:531px">etc</div><div class="fl" style="left:1019px;top:531px">home</div><div class="fl" style="left:1081px;top:531px">lib</div>
<div class="fl" style="left:768px;top:582px">lib64</div><div class="fl" style="left:831px;top:582px">media</div><div class="fl" style="left:893px;top:582px">mnt</div><div class="fl" style="left:956px;top:582px">opt</div><div class="fl" style="left:1019px;top:582px">proc</div><div class="fl" style="left:1081px;top:582px">root</div>
<div class="fl" style="left:768px;top:634px">run</div><div class="fl" style="left:831px;top:634px">sbin</div><div class="fl" style="left:893px;top:634px">srv</div><div class="fl" style="left:956px;top:634px">sys</div><div class="fl" style="left:1019px;top:634px">tmp</div><div class="fl" style="left:1081px;top:634px">usr</div>
<div class="fl" style="left:768px;top:686px">var</div>

<!-- workspace panel -->
<div class="a" style="left:1248px;top:111px;width:50px;height:657px;background:#33393b;border:1px solid #5d6468;border-radius:9px"></div>
<div class="a" style="left:1252px;top:114px;width:40px;height:92px;background:#000;border:4px solid #24599c;border-radius:3px"></div>
<div class="a" style="left:1257px;top:120px;width:23px;height:80px;background:#f2f2f2"></div>
<div class="a" style="left:1258px;top:122px;width:22px;height:3px;background:#ccc"></div>
<div class="a" style="left:1259px;top:128px;width:21px;height:20px;background:repeating-linear-gradient(#fff 0 2px,#a8b4c4 2px 3px)"></div>
<div class="a" style="left:1258px;top:150px;width:22px;height:48px;background:linear-gradient(#dfe5ea 0,#fff 25%,#eee 100%)"></div>
<div class="a" style="left:1257px;top:208px;width:23px;height:78px;background:linear-gradient(135deg,#040e22,#062048 60%,#02102a)"></div>

<!-- watermark -->
<svg style="left:0;top:0" width="1280" height="800"><path fill-rule="evenodd" fill="#ff0000" fill-opacity=".14" d="M1112 624H1270V781H1112ZM1207 643H1242V763H1160V737H1206V677L1177 701 1162 682Z"/><path d="M1207 643H1242V763H1160V737H1206V677L1177 701 1162 682Z" fill="#fff" fill-opacity=".13"/></svg>
</body></html>
